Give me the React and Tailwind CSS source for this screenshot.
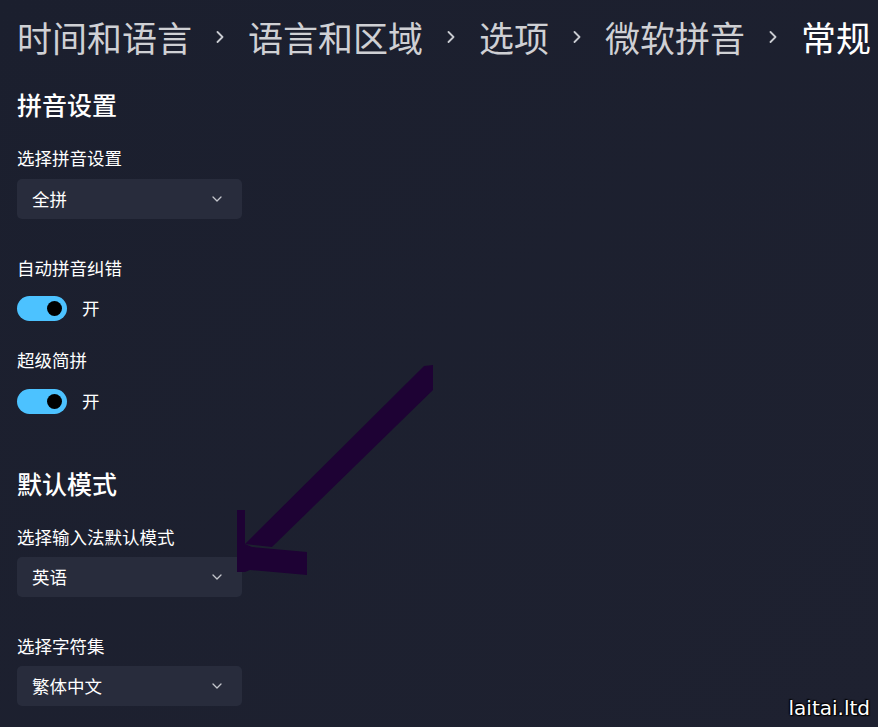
import { useState } from 'react';

const crumbs = ['时间和语言', '语言和区域', '选项', '微软拼音'];

function Chevron() {
  return (
    <svg width="10" height="12" viewBox="0 0 10 12" className="shrink-0">
      <polyline points="2.5,1 7.5,6 2.5,11" fill="none" stroke="#c9cbd1" strokeWidth="1.8" strokeLinecap="round" strokeLinejoin="round" />
    </svg>
  );
}

function Select({ value }) {
  return (
    <div className="w-[225px] h-[40px] rounded-[5px] bg-[#282c3c] flex items-center justify-between pl-[15px] pr-[20px] text-[17.5px] text-white">
      <span>{value}</span>
      <svg width="10" height="6" viewBox="0 0 10 6">
        <polyline points="1,1 5,5 9,1" fill="none" stroke="#c4c6cc" strokeWidth="1.3" strokeLinecap="round" strokeLinejoin="round" />
      </svg>
    </div>
  );
}

function Toggle({ initial = true }) {
  const [on, setOn] = useState(initial);
  return (
    <div className="h-[25px] flex items-center gap-[15px]">
      <button
        onClick={() => setOn(!on)}
        className={
          'w-[50px] h-[25px] rounded-full flex items-center px-[5px] ' +
          (on ? 'bg-[#4cc2ff] justify-end' : 'bg-transparent border border-gray-400 justify-start')
        }
      >
        <span className={'w-[15px] h-[15px] rounded-full ' + (on ? 'bg-black' : 'bg-gray-300')} />
      </button>
      <span className="text-[17.5px] text-white">{on ? '开' : '关'}</span>
    </div>
  );
}

function Label({ children, className = '' }) {
  return <div className={'h-[24px] flex items-center text-[17.5px] text-white ' + className}>{children}</div>;
}

function Heading({ children, className = '' }) {
  return <div className={'h-[34px] flex items-center text-[25px] font-medium text-white ' + className}>{children}</div>;
}

export default function App() {
  return (
    <div
      className="relative w-[878px] h-[727px] overflow-hidden bg-gradient-to-br from-[#1b1f2e] to-[#1e2130] px-[17px]"
      style={{ fontFamily: '"Noto Sans CJK SC", "Noto Sans", sans-serif' }}
    >
      <div className="h-[74px] flex items-center gap-[23px] text-[35px] whitespace-nowrap">
        {crumbs.map((c) => (
          <div key={c} className="flex items-center gap-[23px]">
            <span className="text-[#cfd0d4]">{c}</span>
            <Chevron />
          </div>
        ))}
        <span className="text-white">常规</span>
      </div>

      <Heading className="mt-[14px]">拼音设置</Heading>
      <Label className="mt-[24px]">选择拼音设置</Label>
      <div className="mt-[9px]">
        <Select value="全拼" />
      </div>

      <Label className="mt-[37px]">自动拼音纠错</Label>
      <div className="mt-[16px]">
        <Toggle />
      </div>

      <Label className="mt-[27px]">超级简拼</Label>
      <div className="mt-[17px]">
        <Toggle />
      </div>

      <Heading className="mt-[53px]">默认模式</Heading>
      <Label className="mt-[24px]">选择输入法默认模式</Label>
      <div className="mt-[8px]">
        <Select value="英语" />
      </div>

      <Label className="mt-[37px]">选择字符集</Label>
      <div className="mt-[8px]">
        <Select value="繁体中文" />
      </div>

      {/* hand-drawn annotation arrow */}
      <svg className="absolute left-0 top-0 pointer-events-none" width="878" height="727" viewBox="0 0 878 727">
        <polygon points="424,366 433,365 433,390 272,547 245,544" fill="#1e0234" />
        <polygon points="237,510 245,510 245,544 252,547 307,552 307,575 250,570 245,572 237,572" fill="#1e0234" />
      </svg>

      <div
        className="absolute right-[8px] bottom-[4px] text-[20px] text-white"
        style={{ fontFamily: '"DejaVu Sans", sans-serif', textShadow: '0 0 2px #000, 0 0 2px #000, 1px 1px 1px #000, -1px -1px 1px #000' }}
      >
        laitai.ltd
      </div>
    </div>
  );
}
